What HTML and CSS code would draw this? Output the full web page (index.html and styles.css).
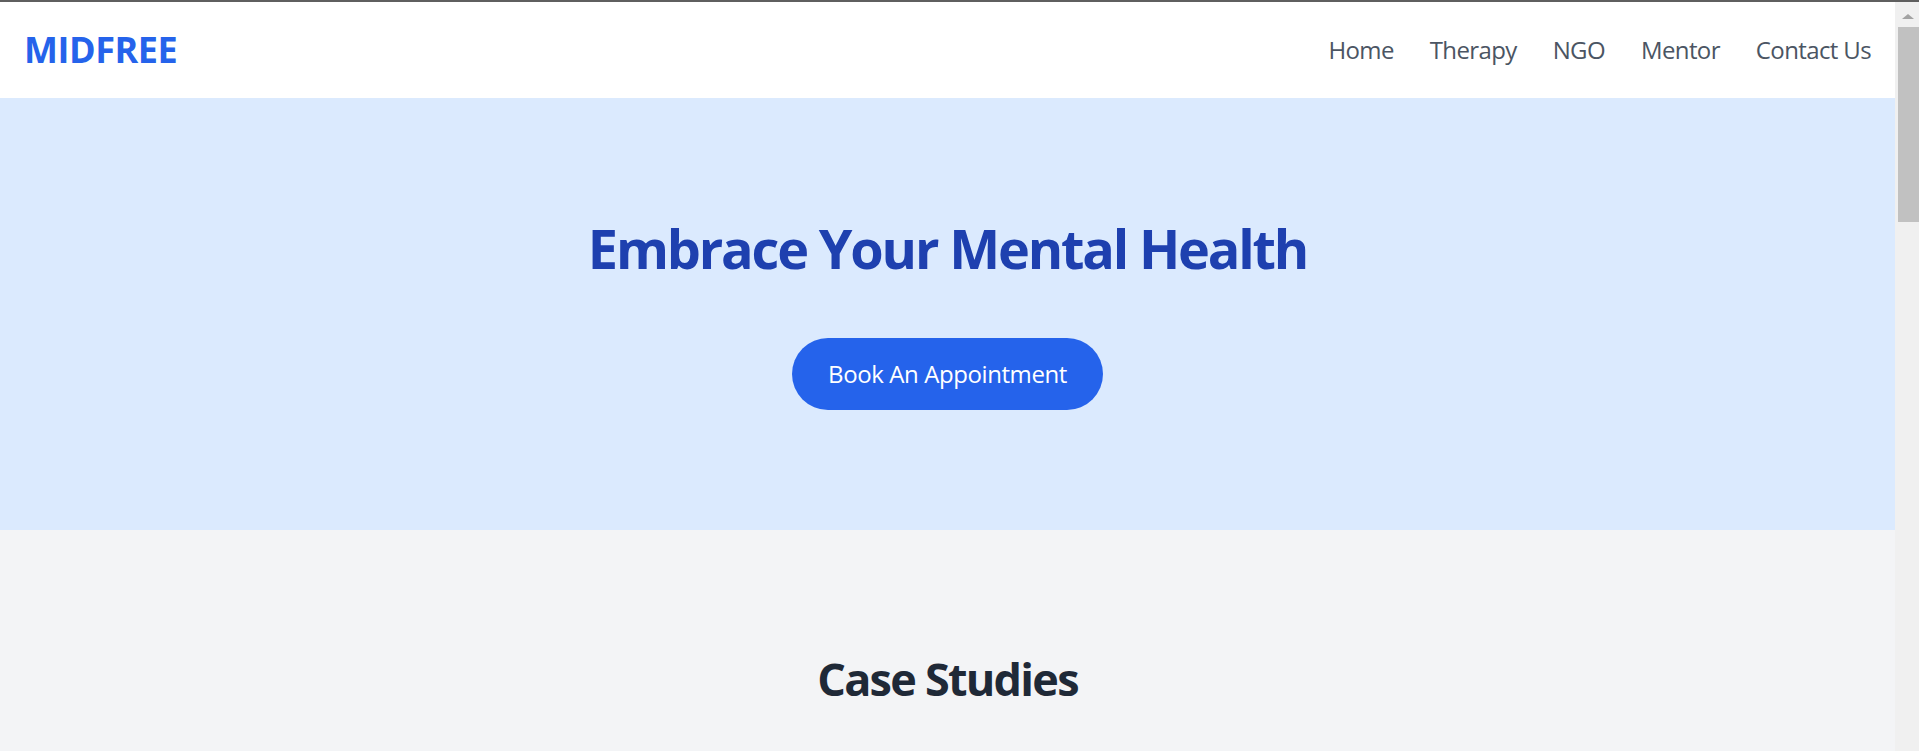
FILE: index.html
```html
<!DOCTYPE html>
<html lang="en">
<head>
<meta charset="utf-8">
<title>MIDFREE</title>
<link rel="stylesheet" href="styles.css">
</head>
<body>
<div class="window-edge"></div>
<div class="frame">
  <div class="page">
    <header class="site-header">
      <a class="logo" href="#">MIDFREE</a>
      <nav class="nav">
        <a href="#">Home</a>
        <a href="#">Therapy</a>
        <a href="#">NGO</a>
        <a href="#">Mentor</a>
        <a href="#">Contact Us</a>
      </nav>
    </header>
    <section class="hero">
      <h1 class="hero-title">Embrace Your Mental Health</h1>
      <a class="btn" href="#">Book An Appointment</a>
    </section>
    <section class="cases">
      <h2 class="cases-title">Case Studies</h2>
    </section>
  </div>
  <div class="scrollbar">
    <div class="arrow"></div>
    <div class="thumb"></div>
  </div>
</div>
</body>
</html>
```
FILE: styles.css
```css
* { box-sizing: border-box; }
html, body { margin: 0; padding: 0; }
body {
  height: 751px;
  overflow: hidden;
  display: flex;
  flex-direction: column;
  font-family: "Open Sans", "Noto Sans", sans-serif;
  background: #f3f4f6;
}
.window-edge { height: 2px; background: #5f5f5f; flex: none; }
.frame { flex: 1; display: flex; min-height: 0; }
.page { flex: 1; min-width: 0; overflow: hidden; background: #f3f4f6; }
.scrollbar {
  width: 24px; flex: none; background: #f0f0f0;
  display: flex; flex-direction: column; align-items: center;
}
.arrow {
  margin-top: 12px;
  width: 0; height: 0;
  border-left: 6px solid transparent;
  border-right: 6px solid transparent;
  border-bottom: 5px solid #a3a3a3;
  margin-left: 1px;
}
.thumb {
  margin-top: 8px;
  width: 21px; height: 195px;
  background: #c1c1c1;
  margin-left: 3px;
}
.site-header {
  height: 96px;
  background: #fff;
  display: flex;
  align-items: center;
  justify-content: space-between;
  padding: 0 24px;
}
.logo {
  font-size: 36px; line-height: 48px; font-weight: 700;
  letter-spacing: -0.012em;
  color: #2563eb; text-decoration: none;
}
.nav { display: flex; gap: 36px; }
.nav a {
  font-size: 24px; line-height: 36px; color: #4b5563; text-decoration: none;
  letter-spacing: -0.026em;
}
.hero {
  background: #dbeafe;
  padding: 120px 24px;
  display: flex; flex-direction: column; align-items: center;
}
.hero-title {
  margin: 0 0 60px;
  font-size: 54px; line-height: 60px; font-weight: 700;
  letter-spacing: -0.04em;
  color: #1e40af;
}
.btn {
  display: inline-block;
  background: #2563eb; color: #fff;
  font-size: 24px; line-height: 36px;
  letter-spacing: -0.017em;
  padding: 18px 36px;
  border-radius: 9999px;
  text-decoration: none;
}
.cases { padding: 122px 24px 118px; text-align: center; }
.cases-title {
  margin: 0;
  font-size: 45px; line-height: 54px; font-weight: 700;
  letter-spacing: -0.039em;
  color: #1f2937;
}
```
